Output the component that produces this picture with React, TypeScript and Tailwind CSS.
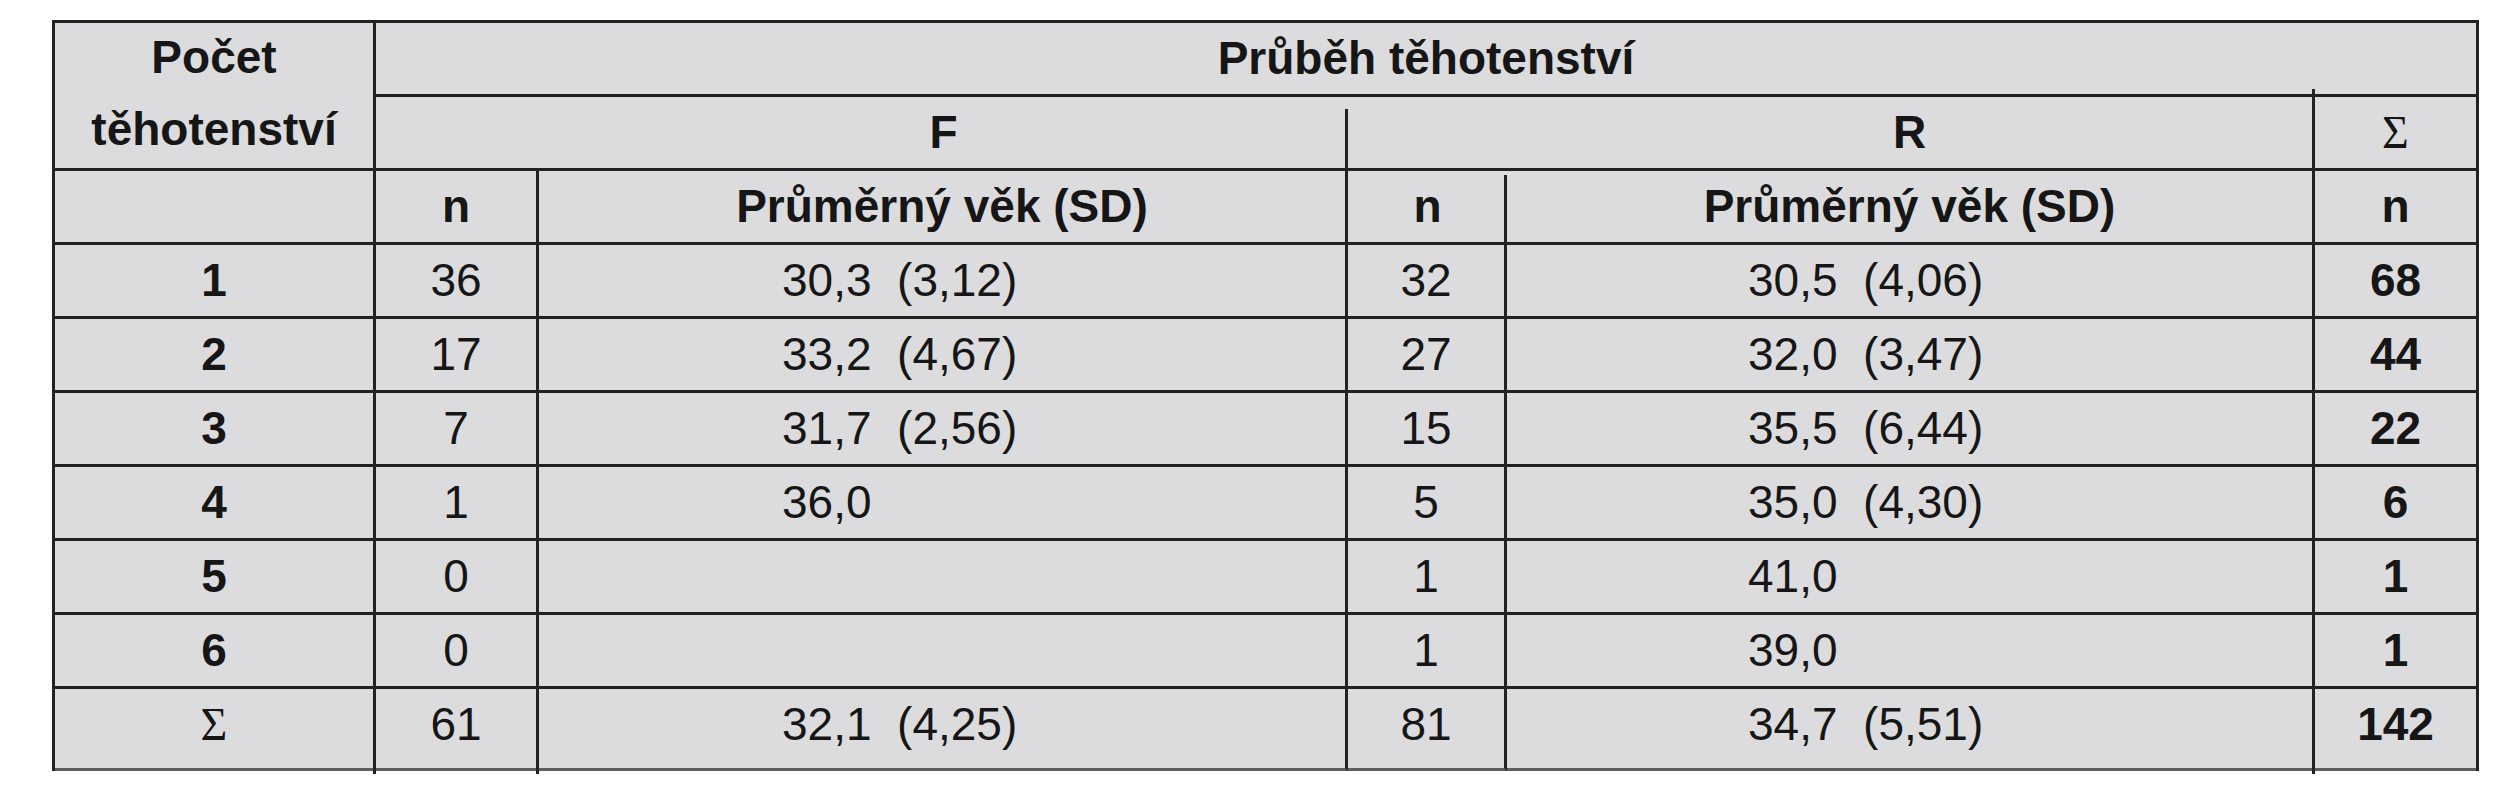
import React from "react";

const rows: string[][] = [
  ["1", "36", "30,3  (3,12)", "32", "30,5  (4,06)", "68"],
  ["2", "17", "33,2  (4,67)", "27", "32,0  (3,47)", "44"],
  ["3", "7", "31,7  (2,56)", "15", "35,5  (6,44)", "22"],
  ["4", "1", "36,0", "5", "35,0  (4,30)", "6"],
  ["5", "0", "", "1", "41,0", "1"],
  ["6", "0", "", "1", "39,0", "1"],
  ["Σ", "61", "32,1  (4,25)", "81", "34,7  (5,51)", "142"],
];

const sans = "font-['Liberation_Sans',Arial,sans-serif]";
const serif = "font-['Liberation_Serif','Times_New_Roman',serif]";

export default function App() {
  return (
    <div className="min-h-[800px] w-[2500px] bg-white pt-[20px] pl-[52px]">
      <div
        className={`${sans} grid w-fit grid-cols-[321px_163px_809px_159px_808px_161px] grid-rows-[74px_74px_74px_74px_74px_74px_74px_74px_74px_82px] border-t-[3px] border-l-[3px] border-r-[3px] border-[#222222] bg-[#dcdcde] text-[46px] text-[#161616]`}
      >
        {/* Header row 1-2 first column */}
        <div className="row-span-2 flex flex-col items-center justify-start border-b-[3px] border-r-[3px] border-[#222222] font-bold leading-[74px]">
          <span className="-mt-[3px]">Počet</span>
          <span className="-mt-[2px]">těhotenství</span>
        </div>
        <div className="col-span-5 flex items-center justify-center border-b-[3px] border-[#222222] font-bold">
          Průběh těhotenství
        </div>

        {/* Header row 2 */}
        <div className="relative col-span-2 flex items-center justify-center border-b-[3px] border-[#222222] pl-[163px] font-bold">
          F
          <div className="absolute right-0 top-[12px] bottom-0 w-[3px] bg-[#222222]" />
        </div>
        <div className="relative col-span-2 flex items-center justify-center border-b-[3px] border-r-[3px] border-[#222222] pl-[159px] font-bold">
          R
          <div className="absolute -right-[3px] -top-[8px] h-[8px] w-[3px] bg-[#222222]" />
        </div>
        <div className={`${serif} flex items-center justify-center border-b-[3px] border-[#222222]`}>
          Σ
        </div>

        {/* Header row 3 */}
        <div className="border-b-[3px] border-r-[3px] border-[#222222]" />
        <div className="flex items-center justify-center border-b-[3px] border-r-[3px] border-[#222222] font-bold">
          n
        </div>
        <div className="flex items-center justify-center border-b-[3px] border-r-[3px] border-[#222222] font-bold">
          Průměrný věk (SD)
        </div>
        <div className="relative flex items-center justify-center border-b-[3px] border-[#222222] font-bold">
          n
          <div className="absolute right-0 top-[4px] bottom-0 w-[3px] bg-[#222222]" />
        </div>
        <div className="flex items-center justify-center border-b-[3px] border-r-[3px] border-[#222222] font-bold">
          Průměrný věk (SD)
        </div>
        <div className="flex items-center justify-center border-b-[3px] border-[#222222] font-bold">
          n
        </div>

        {/* Data rows */}
        {rows.map((r, i) => {
          const last = i === rows.length - 1;
          const bottom = last
            ? "border-b-[3px] border-b-[#5e5e5e] pb-[8px]"
            : "border-b-[3px]";
          return (
            <React.Fragment key={i}>
              <div
                className={`relative flex items-center justify-center border-r-[3px] border-[#222222] ${bottom} ${
                  r[0] === "Σ" ? serif : "font-bold"
                }`}
              >
                {r[0]}
                {last && (
                  <div className="absolute -right-[3px] -bottom-[6px] h-[6px] w-[3px] bg-[#222222]" />
                )}
              </div>
              <div
                className={`relative flex items-center justify-center border-r-[3px] border-[#222222] ${bottom}`}
              >
                {r[1]}
                {last && (
                  <div className="absolute -right-[3px] -bottom-[6px] h-[6px] w-[3px] bg-[#222222]" />
                )}
              </div>
              <div
                className={`flex items-center justify-start whitespace-pre border-r-[3px] border-[#222222] pl-[243px] ${bottom}`}
              >
                {r[2]}
              </div>
              <div
                className={`flex items-center justify-center border-r-[3px] border-[#222222] ${bottom}`}
              >
                {r[3]}
              </div>
              <div
                className={`relative flex items-center justify-start whitespace-pre border-r-[3px] border-[#222222] pl-[241px] ${bottom}`}
              >
                {r[4]}
                {last && (
                  <div className="absolute -right-[3px] -bottom-[6px] h-[6px] w-[3px] bg-[#222222]" />
                )}
              </div>
              <div
                className={`flex items-center justify-center border-[#222222] font-bold ${bottom}`}
              >
                {r[5]}
              </div>
            </React.Fragment>
          );
        })}
      </div>
    </div>
  );
}
